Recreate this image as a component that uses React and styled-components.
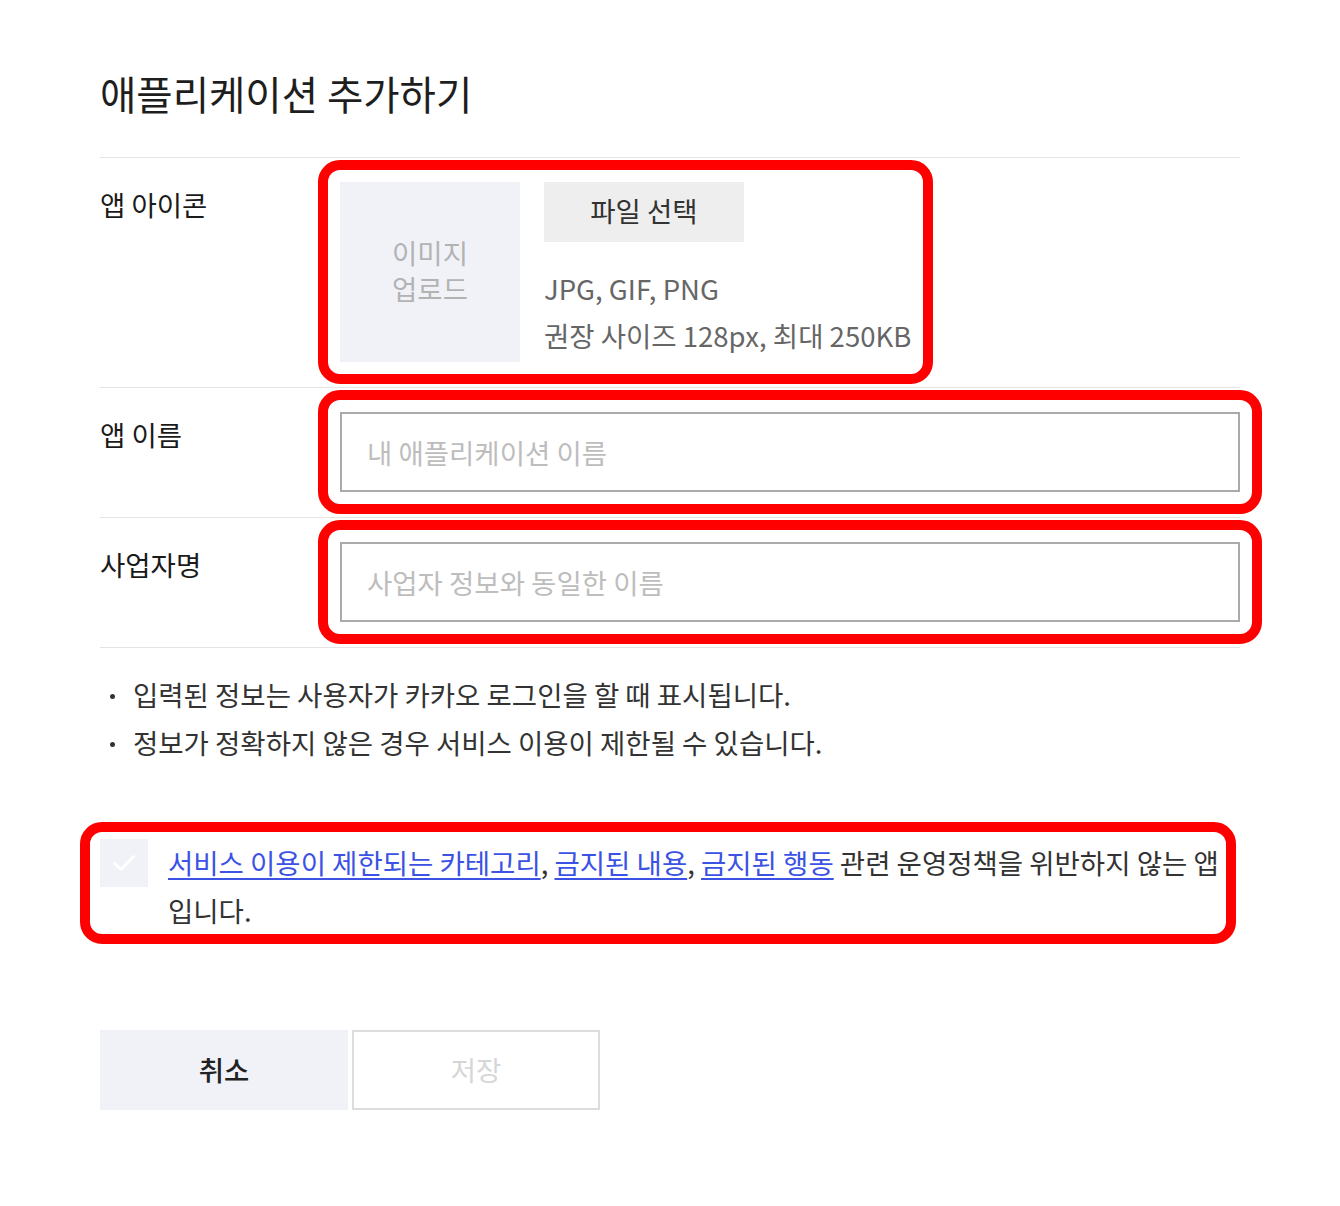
import React from "react";
import styled, { createGlobalStyle } from "styled-components";

const GlobalStyle = createGlobalStyle`
  body {
    margin: 0;
    background: #fff;
    font-family: "Noto Sans CJK KR", "Noto Sans", sans-serif;
    color: #222;
  }
`;

const Page = styled.div`
  width: 1140px;
  padding: 68px 100px 96px;
`;

const Title = styled.h2`
  margin: 0 0 39px;
  font-size: 39.5px;
  font-weight: 400;
  line-height: 50px;
  color: #1e1e1e;
`;

const Form = styled.div`
  border-top: 1px solid #e4e4e4;
`;

const Row = styled.div`
  display: grid;
  grid-template-columns: 240px 1fr;
  padding: 24px 0 25px;
  border-bottom: 1px solid #e4e4e4;
`;

const Label = styled.div`
  margin-top: -2px;
  font-size: 27.5px;
  line-height: 48px;
  color: #1a1a1a;
`;

const Highlight = styled.div`
  border: 10px solid #ff0000;
  border-radius: 22px;
  margin: ${(p) => p.$margin || "-22px"};
  padding: ${(p) => p.$padding || "12px"};
  justify-self: ${(p) => (p.$fit ? "start" : "stretch")};
`;

const IconField = styled.div`
  display: flex;
  gap: 24px;
`;

const UploadBox = styled.div`
  width: 180px;
  height: 180px;
  padding-bottom: 4px;
  box-sizing: border-box;
  background: #f1f2f8;
  display: flex;
  align-items: center;
  justify-content: center;
  text-align: center;
  font-size: 27.5px;
  line-height: 36px;
  color: #b3b3b3;
`;

const FileColumn = styled.div`
  display: flex;
  flex-direction: column;
  align-items: flex-start;
`;

const FileButton = styled.button`
  width: 200px;
  height: 60px;
  padding: 0 0 4px;
  border: 0;
  background: #eeeeee;
  font-family: inherit;
  font-size: 27.5px;
  color: #333;
  cursor: pointer;
`;

const Hint = styled.p`
  margin: 23px 0 0;
  font-size: 27.5px;
  line-height: 47px;
  color: #666;
  white-space: nowrap;
`;

const TextInput = styled.input`
  display: block;
  box-sizing: border-box;
  width: 100%;
  height: 80px;
  padding: 0 25px;
  border: 2px solid #aaaaaa;
  font-family: inherit;
  font-size: 27.5px;
  color: #222;
  outline: none;

  &::placeholder {
    color: #bdbdbd;
  }
`;

const Notes = styled.ul`
  list-style: none;
  margin: 0;
  padding: 22px 0 0;
`;

const Note = styled.li`
  position: relative;
  padding-left: 33px;
  font-size: 27.5px;
  line-height: 48px;
  color: #333;

  &::before {
    content: "";
    position: absolute;
    left: 10px;
    top: 24px;
    width: 5px;
    height: 5px;
    border-radius: 50%;
    background: #333;
  }
`;

const Terms = styled.div`
  margin-top: 72px;
`;

const TermsRow = styled.label`
  display: flex;
  gap: 20px;
  align-items: flex-start;
  cursor: pointer;
`;

const CheckBox = styled.span`
  flex: none;
  width: 48px;
  height: 48px;
  margin-top: 1px;
  background: #f1f2f8;
  display: flex;
  align-items: center;
  justify-content: center;
`;

const TermsText = styled.p`
  margin: 0;
  font-size: 27.5px;
  line-height: 48px;
  color: #333;
`;

const PolicyLink = styled.a`
  color: #3b52e4;
  text-decoration: underline;
  text-underline-offset: 4px;
`;

const Actions = styled.div`
  display: flex;
  gap: 4px;
  margin-top: 96px;
`;

const ActionButton = styled.button`
  width: 248px;
  height: 80px;
  padding: 0 0 3px;
  box-sizing: border-box;
  font-family: inherit;
  font-size: 27.5px;
  font-weight: ${(p) => (p.$primary ? 500 : 400)};
  background: ${(p) => (p.$primary ? "#f1f2f8" : "#fff")};
  color: ${(p) => (p.$primary ? "#222" : "#d6d6d6")};
  border: ${(p) => (p.$primary ? "0" : "2px solid #dddddd")};
  cursor: ${(p) => (p.$primary ? "pointer" : "default")};
`;

const CheckIcon = () => (
  <svg width="24" height="20" viewBox="0 0 24 20" fill="none">
    <path
      d="M2.5 10.5l6.5 6L21.5 3.5"
      stroke="#fff"
      strokeWidth="3"
      strokeLinecap="round"
      strokeLinejoin="round"
    />
  </svg>
);

const App = () => {
  return (
    <Page>
      <GlobalStyle />
      <Title>애플리케이션 추가하기</Title>

      <Form>
        <Row>
          <Label>앱 아이콘</Label>
          <Highlight $fit>
            <IconField>
              <UploadBox>
                이미지
                <br />
                업로드
              </UploadBox>
              <FileColumn>
                <FileButton type="button">파일 선택</FileButton>
                <Hint>
                  JPG, GIF, PNG
                  <br />
                  권장 사이즈 128px, 최대 250KB
                </Hint>
              </FileColumn>
            </IconField>
          </Highlight>
        </Row>

        <Row>
          <Label>앱 이름</Label>
          <Highlight>
            <TextInput placeholder="내 애플리케이션 이름" />
          </Highlight>
        </Row>

        <Row>
          <Label>사업자명</Label>
          <Highlight>
            <TextInput placeholder="사업자 정보와 동일한 이름" />
          </Highlight>
        </Row>
      </Form>

      <Notes>
        <Note>입력된 정보는 사용자가 카카오 로그인을 할 때 표시됩니다.</Note>
        <Note>정보가 정확하지 않은 경우 서비스 이용이 제한될 수 있습니다.</Note>
      </Notes>

      <Terms>
        <Highlight $margin="-16px 4px -10px -20px" $padding="6px 0 0 10px">
          <TermsRow>
            <CheckBox>
              <CheckIcon />
            </CheckBox>
            <TermsText>
              <PolicyLink href="#">서비스 이용이 제한되는 카테고리</PolicyLink>,{" "}
              <PolicyLink href="#">금지된 내용</PolicyLink>,{" "}
              <PolicyLink href="#">금지된 행동</PolicyLink> 관련 운영정책을
              위반하지 않는 앱입니다.
            </TermsText>
          </TermsRow>
        </Highlight>
      </Terms>

      <Actions>
        <ActionButton $primary type="button">
          취소
        </ActionButton>
        <ActionButton type="button" disabled>
          저장
        </ActionButton>
      </Actions>
    </Page>
  );
};

export default App;
